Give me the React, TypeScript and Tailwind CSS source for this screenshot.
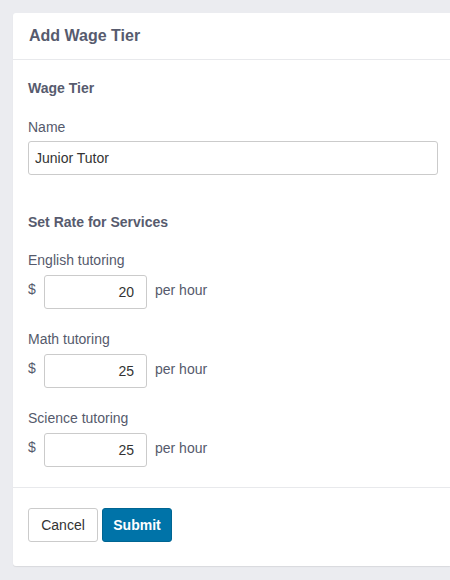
import React from "react";

const rates = [
  { label: "English tutoring", value: "20" },
  { label: "Math tutoring", value: "25" },
  { label: "Science tutoring", value: "25" },
];

export default function App() {
  return (
    <div
      className="w-[450px] h-[580px] bg-[#ebecf0] pt-[13px] pl-[13px] overflow-hidden"
      style={{ fontFamily: '"Liberation Sans", Arial, sans-serif' }}
    >
      <div className="bg-white rounded-l-[3px] shadow-[0_1px_1px_rgba(0,0,0,0.08)] text-[#555a6c]">
        {/* Header */}
        <div className="h-[47px] flex items-center px-[16px] border-b border-[#e8e9ec]">
          <h1 className="text-[16px] font-bold text-[#575b6e]">Add Wage Tier</h1>
        </div>

        {/* Body */}
        <div className="px-[15px] pt-[18px] pb-[20px] border-b border-[#e8e9ec]">
          <h2 className="text-[14px] leading-[20px] font-bold text-[#575b6e]">Wage Tier</h2>
          <label className="block mt-[19px] text-[14px] leading-[20px]">Name</label>
          <input
            defaultValue="Junior Tutor"
            className="mt-[4px] block w-[410px] h-[34px] px-[6px] text-[14px] text-[#333] border border-[#cbcbcb] rounded-[3px] outline-none"
          />

          <h2 className="mt-[37px] text-[14px] leading-[20px] font-bold text-[#575b6e]">
            Set Rate for Services
          </h2>

          <div className="flex flex-col gap-[20px] mt-[18px]">
            {rates.map((r) => (
              <div key={r.label}>
                <label className="block text-[14px] leading-[20px]">{r.label}</label>
                <div className="flex items-center mt-[5px]">
                  <span className="w-[16px] text-[14px] -mt-[6px]">$</span>
                  <input
                    defaultValue={r.value}
                    className="w-[103px] h-[34px] px-[12px] text-right text-[14px] text-[#333] border border-[#cbcbcb] rounded-[3px] outline-none"
                  />
                  <span className="ml-[8px] text-[14px] -mt-[4px]">per hour</span>
                </div>
              </div>
            ))}
          </div>
        </div>

        {/* Footer */}
        <div className="px-[15px] pt-[20px] pb-[24px] flex gap-[4px]">
          <button className="h-[34px] w-[70px] text-[14px] text-[#333] bg-white border border-[#cbcbcb] rounded-[3px]">
            Cancel
          </button>
          <button className="h-[34px] w-[70px] text-[14px] font-bold text-white bg-[#0073a8] border border-[#006592] rounded-[3px]">
            Submit
          </button>
        </div>
      </div>
    </div>
  );
}
